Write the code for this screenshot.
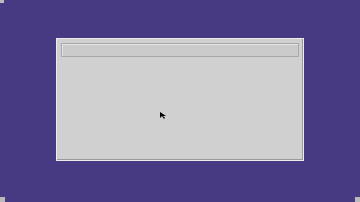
export default function App() {
  return (
    <div className="relative w-[360px] h-[202px] bg-[#483a82] overflow-hidden font-['Liberation_Sans',sans-serif]">
      <div className="pt-[38px] pl-[56px]">
        <div className="w-[248px] h-[123px] bg-[#d0d0d0] border border-[#ececec] shadow-[inset_-1px_-1px_0_#9a9a9a]">
          <div className="px-[4px] pt-[4px]">
            <div className="h-[14px] bg-[#cbcbcb] border border-[#a8a8a8] shadow-[inset_1px_1px_0_#e4e4e4]" />
          </div>
        </div>
      </div>
      <svg className="absolute left-[160px] top-[112px]" width="7" height="8" viewBox="0 0 7 8">
        <path d="M0 0 L0 6 L2 4 L4 7 L5 6 L3 4 L6 4 Z" fill="#000" />
      </svg>
      <div className="absolute left-0 bottom-0 w-[5px] h-[5px] bg-[#bbbbbb]" />
      <div className="absolute right-0 bottom-0 w-[5px] h-[5px] bg-[#bbbbbb]" />
      <div className="absolute left-0 top-0 w-[4px] h-[3px] bg-[#bbbbbb]" />
    </div>
  );
}
